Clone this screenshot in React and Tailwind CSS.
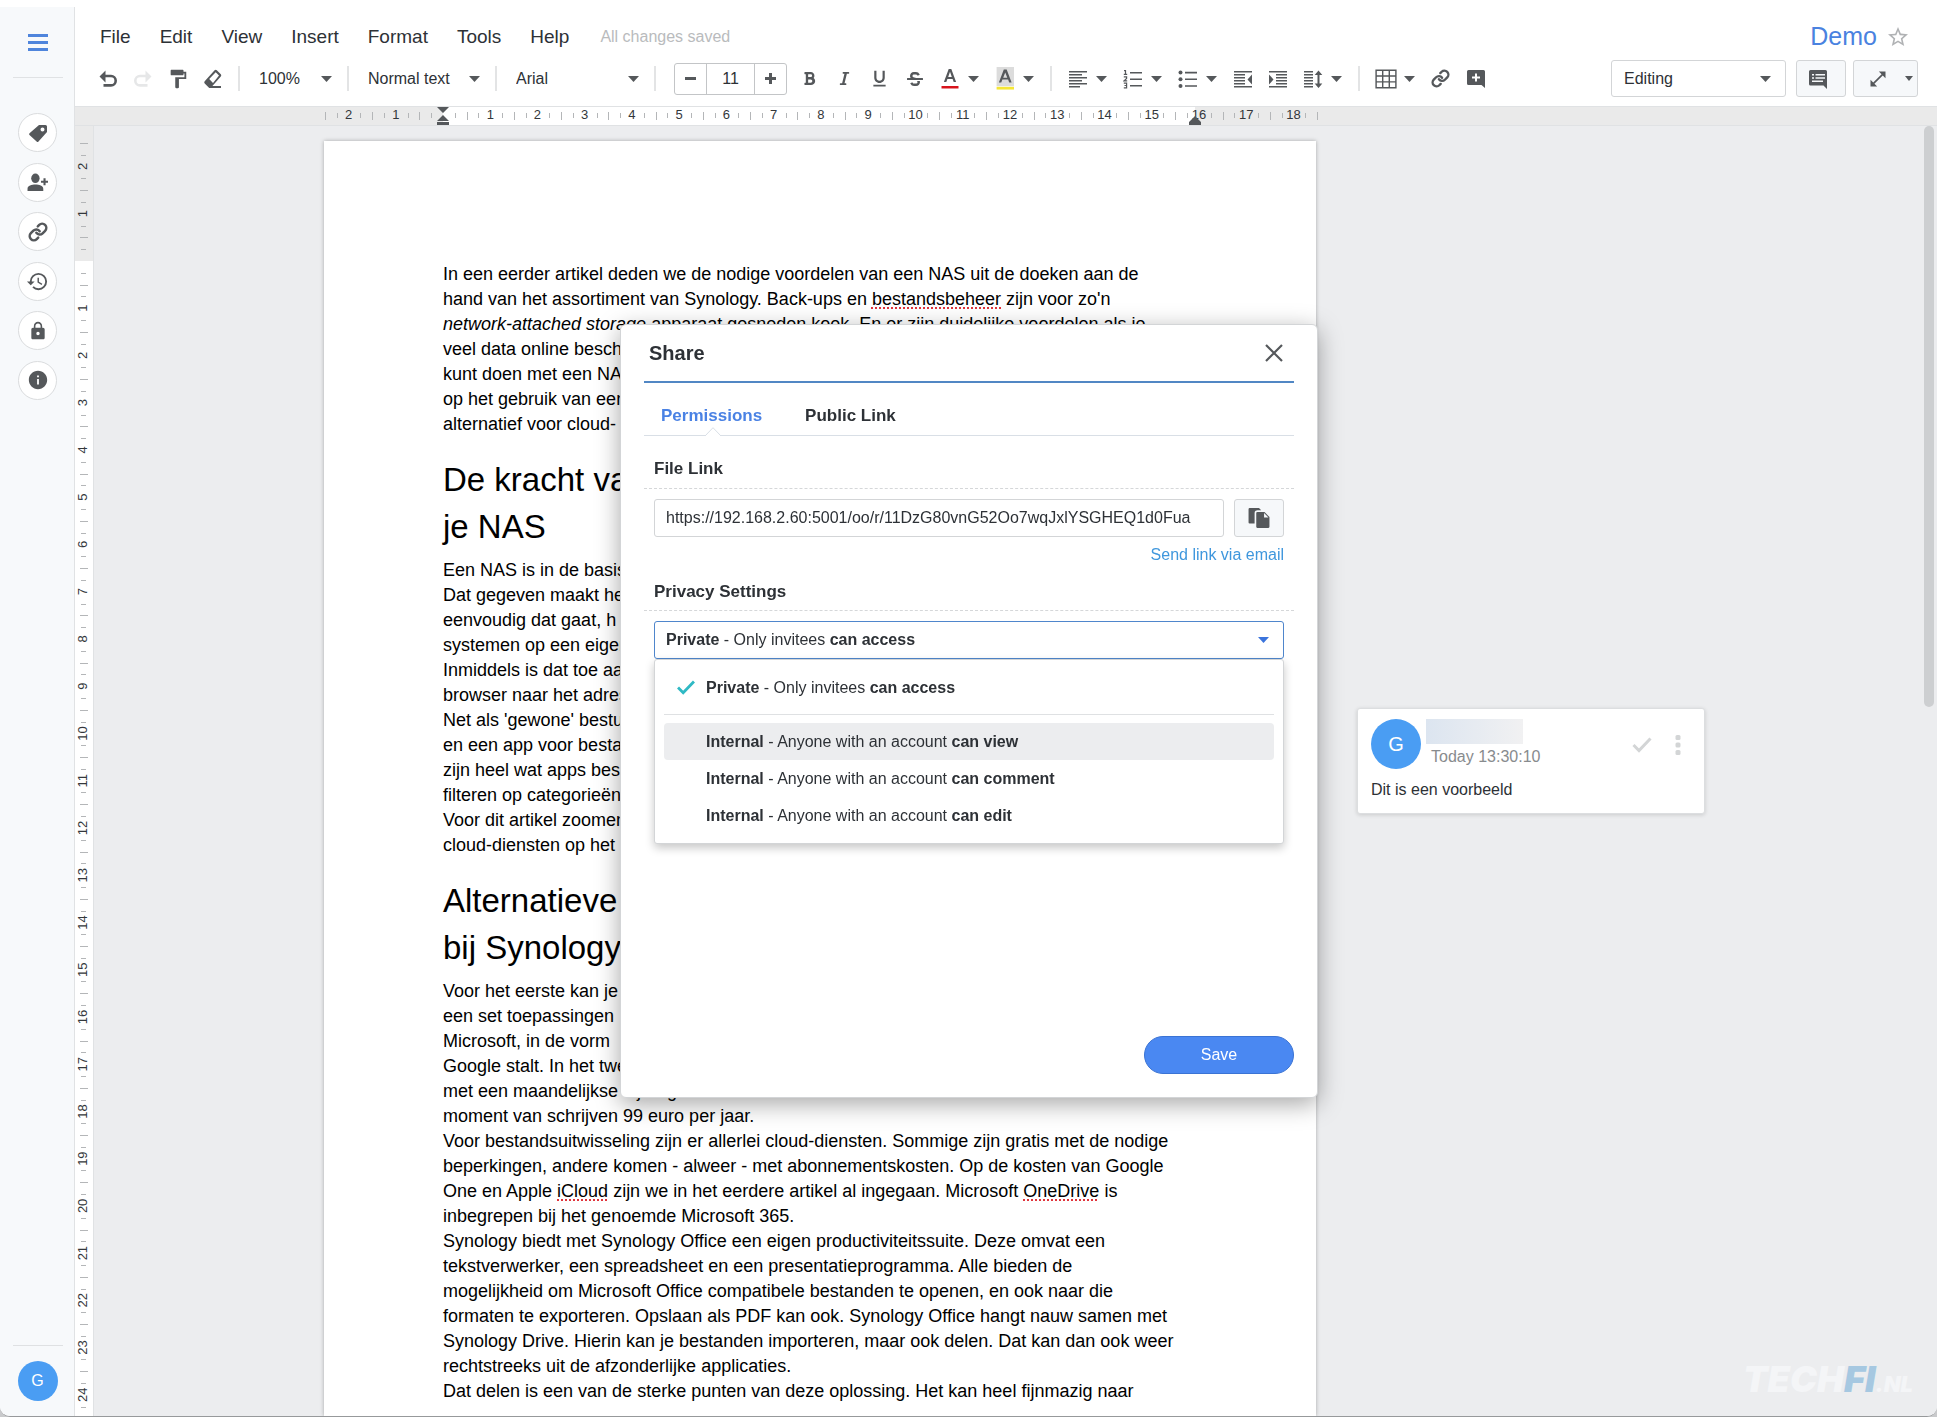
import { useState } from 'react'
import { Link as ChainIcon } from 'lucide-react'
import { FaBold, FaItalic, FaStrikethrough } from 'react-icons/fa'
import {
  MdFormatUnderlined,
  MdFormatPaint,
  MdHistory,
  MdLock,
  MdInfo,
  MdOpenInFull,
  MdStarBorder,
} from 'react-icons/md'

const MENUS = ['File', 'Edit', 'View', 'Insert', 'Format', 'Tools', 'Help']

// One centimetre on screen at 125% zoom
const CM = 120 / 2.54

// Plain strings are text; { s } is a misspelled word, { i } is italic
const INTRO = [
  ['In een eerder artikel deden we de nodige voordelen van een NAS uit de doeken aan de'],
  ['hand van het assortiment van Synology. Back-ups en ', { s: 'bestandsbeheer' }, " zijn voor zo'n"],
  [{ i: 'network-attached storage' }, ' apparaat gesneden koek. En er zijn duidelijke voordelen als je'],
  ['veel data online beschikbaar'],
  ['kunt doen met een NAS'],
  ['op het gebruik van een'],
  ['alternatief voor cloud-'],
]

const NAS = [
  ['Een NAS is in de basis'],
  ['Dat gegeven maakt het'],
  ['eenvoudig dat gaat, h'],
  ['systemen op een eigen'],
  ['Inmiddels is dat toe aan'],
  ['browser naar het adres'],
  ["Net als 'gewone' bestu"],
  ['en een app voor bestan'],
  ['zijn heel wat apps besch'],
  ['filteren op categorieën'],
  ['Voor dit artikel zoomen'],
  ['cloud-diensten op het'],
]

const OFFICE = [
  ['Voor het eerste kan je'],
  ['een set toepassingen'],
  ['Microsoft, in de vorm'],
  ['Google stalt. In het twe'],
  ['met een maandelijkse bijdrage'],
  ['moment van schrijven 99 euro per jaar.'],
  ['Voor bestandsuitwisseling zijn er allerlei cloud-diensten. Sommige zijn gratis met de nodige'],
  ['beperkingen, andere komen - alweer - met abonnementskosten. Op de kosten van Google'],
  ['One en Apple ', { s: 'iCloud' }, ' zijn we in het eerdere artikel al ingegaan. Microsoft ', { s: 'OneDrive' }, ' is'],
  ['inbegrepen bij het genoemde Microsoft 365.'],
  ['Synology biedt met Synology Office een eigen productiviteitssuite. Deze omvat een'],
  ['tekstverwerker, een spreadsheet en een presentatieprogramma. Alle bieden de'],
  ['mogelijkheid om Microsoft Office compatibele bestanden te openen, en ook naar die'],
  ['formaten te exporteren. Opslaan als PDF kan ook. Synology Office hangt nauw samen met'],
  ['Synology Drive. Hierin kan je bestanden importeren, maar ook delen. Dat kan dan ook weer'],
  ['rechtstreeks uit de afzonderlijke applicaties.'],
  ['Dat delen is een van de sterke punten van deze oplossing. Het kan heel fijnmazig naar'],
]

const PRIVACY = [
  { id: 'private', who: 'Private', text: 'Only invitees', can: 'can access' },
  { id: 'view', who: 'Internal', text: 'Anyone with an account', can: 'can view' },
  { id: 'comment', who: 'Internal', text: 'Anyone with an account', can: 'can comment' },
  { id: 'edit', who: 'Internal', text: 'Anyone with an account', can: 'can edit' },
]

/* ---------- icons ---------- */

function Caret({ className = '' }) {
  return (
    <svg className={`h-[6px] w-[11px] shrink-0 ${className}`} viewBox="0 0 11 6" fill="currentColor" aria-hidden="true">
      <path d="M0 0h11L5.5 6z" />
    </svg>
  )
}

function Icon({ children, className = 'size-[20px]' }) {
  return (
    <svg className={`shrink-0 ${className}`} viewBox="0 0 20 20" fill="currentColor" aria-hidden="true">
      {children}
    </svg>
  )
}

const UndoIcon = () => (
  <Icon>
    <path d="M1 7l6-6v4.2h5.5a6 6 0 010 12H5v-2.6h7.5a3.4 3.4 0 000-6.8H7V13z" transform="translate(.5 .5)" />
  </Icon>
)

const RedoIcon = () => (
  <Icon>
    <path d="M1 7l6-6v4.2h5.5a6 6 0 010 12H5v-2.6h7.5a3.4 3.4 0 000-6.8H7V13z" transform="translate(19.5 .5) scale(-1 1)" />
  </Icon>
)

const EraserIcon = () => (
  <Icon>
    <path
      fillRule="evenodd"
      d="M11.6 1.2a1.6 1.6 0 012.2 0l4 4a1.6 1.6 0 010 2.2L9.4 17H18v2H6.2L1.7 14.5a1.6 1.6 0 010-2.2zM12.7 3.2L6.2 10l3.8 4 6-7.5z"
    />
  </Icon>
)

const TextColorIcon = () => (
  <Icon className="size-[20px]">
    <path d="M8.7 0h2.6l4.8 13h-2.4l-1.1-3H7.4l-1.1 3H3.9zM10 2.8L8.2 8h3.6z" />
    <path fill="#d8141c" d="M1.5 17h17v2.500h-17z" />
  </Icon>
)

const HighlightIcon = () => (
  <Icon className="size-[24px]">
    <path fill="#dcdcdc" d="M3 0h14.5v16H3z" />
    <path d="M9 2h2.400l4.100 11h-2l-.9-2.500H7.800L6.900 13h-2zM10.200 4.500L8.500 8.900h3.400z" />
    <path fill="#f5e636" d="M3 16.500h14.500v2.300H3z" />
  </Icon>
)

const AlignIcon = () => (
  <Icon>
    <path d="M1 2h18v1.5H1zM1 5h13v1.5H1zM1 8h18v1.5H1zM1 11h13v1.5H1zM1 14h18v1.5H1zM1 17h11v1.5H1z" />
  </Icon>
)

const NumberedIcon = () => (
  <Icon>
    <path d="M7 3h12v1.6H7zM7 9.5h12v1.6H7zM7 16h12v1.6H7z" />
    <path
      fill="none"
      stroke="currentColor"
      strokeWidth="1.2"
      d="M1 1.6h1.5V5.4M.8 5.4h3.4M.8 7.8h2.8v1.7L1 11.8h3.2M.8 14.2h2.8v4.6H.8M1.5 16.5h2"
    />
  </Icon>
)

const BulletIcon = () => (
  <Icon>
    <circle cx="2.5" cy="3.5" r="2" />
    <circle cx="2.5" cy="10.2" r="2" />
    <circle cx="2.5" cy="17" r="2" />
    <path d="M7 2.8h12v1.6H7zM7 9.5h12v1.6H7zM7 16.2h12v1.6H7z" />
  </Icon>
)

const OutdentIcon = () => (
  <Icon>
    <path d="M1 2h18v1.5H1zM1 5h11v1.5H1zM1 8h11v1.5H1zM1 11h11v1.5H1zM1 14h11v1.5H1zM1 17h18v1.5H1zM19 5.5v10l-4.5-5z" />
  </Icon>
)

const IndentIcon = () => (
  <Icon>
    <path d="M1 2h18v1.5H1zM8 5h11v1.5H8zM8 8h11v1.5H8zM8 11h11v1.5H8zM8 14h11v1.5H8zM1 17h18v1.5H1zM1 5.5v10l4.5-5z" />
  </Icon>
)

const SpacingIcon = () => (
  <Icon>
    <path d="M1 2h9v1.5H1zM1 5h9v1.5H1zM1 8h9v1.5H1zM1 11h9v1.5H1zM1 14h9v1.5H1zM1 17h9v1.5H1z" />
    <path d="M15.5 1.5l3.8 4.5h-2.8v8.5h2.8L15.5 19l-3.8-4.5h2.8V6h-2.8z" />
  </Icon>
)

const TableIcon = () => (
  <Icon className="size-[22px]">
    <path
      fill="none"
      stroke="currentColor"
      strokeWidth="1.3"
      d="M1 2h18v16H1zM1 7.3h18M1 12.6h18M7 2v16M13 2v16"
    />
  </Icon>
)

const AddCommentIcon = () => (
  <Icon>
    <path
      fillRule="evenodd"
      d="M2.5 1h15A1.5 1.5 0 0119 2.5V19l-3.5-3h-13A1.5 1.5 0 011 14.5v-12A1.5 1.5 0 012.5 1zM9 4.500v3H6v2h3v3h2v-3h3v-2h-3v-3z"
    />
  </Icon>
)

const CommentListIcon = () => (
  <Icon>
    <path
      fillRule="evenodd"
      d="M2.5 1h15A1.5 1.5 0 0119 2.5V20l-3.5-3.5h-13A1.5 1.5 0 011 15V2.5A1.5 1.5 0 012.5 1zM4 5v1.6h2V5zM7.5 5v1.6H17V5zM4 8.2v1.6h2V8.2zM7.500 8.200v1.600H17V8.200zM4 11.400V13h11v-1.600z"
    />
  </Icon>
)

const TagIcon = () => (
  <Icon>
    <path
      fillRule="evenodd"
      d="M11 2h6.5A1.5 1.5 0 0119 3.5V9l-8.5 9.5a1.3 1.3 0 01-1.9 0L1.5 12a1.3 1.3 0 010-1.8zM14.5 4.5a2 2 0 100 4 2 2 0 000-4z"
    />
  </Icon>
)

const InviteIcon = () => (
  <Icon className="size-[21px]">
    <ellipse cx="8" cy="6" rx="4" ry="4.500" />
    <path d="M.5 18v-2c0-3 4-4 7.5-4s7.5 1 7.5 4v2zM15.700 6h2v2.300H20v2h-2.300v2.400h-2v-2.400h-2.400v-2h2.400z" />
  </Icon>
)

const CopyIcon = () => (
  <Icon className="size-[22px]">
    <path d="M1.5 1H10l2 2H8.5A2.5 2.5 0 006 5.5V15H1.5A1 1 0 01.5 14V2a1 1 0 011-1z" />
    <path d="M8.5 4.5H15l4.5 4.5v9a1 1 0 01-1 1h-10a1 1 0 01-1-1V5.5a1 1 0 011-1z" />
    <path fill="#f6f8fa" d="M14.6 5.5v4h4z" />
  </Icon>
)

function CheckIcon({ className }) {
  return (
    <svg className={className} viewBox="0 0 20 16" fill="none" stroke="currentColor" strokeWidth="3" aria-hidden="true">
      <path d="M1.5 8l5.5 5.5L18.5 1.5" />
    </svg>
  )
}

/* ---------- toolbar pieces ---------- */

function Tool({ label, children, className = '' }) {
  return (
    <button aria-label={label} className={`flex h-8 w-[35px] shrink-0 items-center justify-center ${className}`}>
      {children}
    </button>
  )
}

function MenuTool({ label, children }) {
  return (
    <button aria-label={label} className="flex h-8 w-[55px] shrink-0 items-center">
      <span className="flex w-9 shrink-0 justify-center">{children}</span>
      <Caret />
    </button>
  )
}

function Sep() {
  return <span className="mx-2 h-[25px] w-[2px] shrink-0 bg-[#e3e4e5]" />
}

function ToolSelect({ label, value, className }) {
  return (
    <div className={`relative flex h-8 shrink-0 items-center ${className}`}>
      <select aria-label={label} className="h-full w-full appearance-none bg-transparent px-[11px] text-[16px] text-[#2d3136]">
        <option>{value}</option>
      </select>
      <Caret className="pointer-events-none absolute right-[7px]" />
    </div>
  )
}

/* ---------- rulers ---------- */

function ticks(from, to) {
  const list = []
  for (let q = from * 4; q <= to * 4; q++) {
    if (q === 0) continue
    list.push({ q, pos: (q / 4) * CM, whole: q % 4 === 0, half: q % 2 === 0 })
  }
  return list
}

function HorizontalRuler() {
  return (
    <div className="flex h-[19px] shrink-0 justify-center border-b border-[#e0e2e4] bg-[#eaeaea] pl-[17px]">
      <svg className="h-[18px] w-[992px] shrink-0 overflow-visible" fill="#33373b" aria-hidden="true">
        <rect x="119" y="0" width="752" height="18" fill="#fff" />
        {ticks(-2.5, 18.5).map(t =>
          t.whole ? (
            <text key={t.q} x={119 + t.pos} y="12" fontSize="13" textAnchor="middle">
              {Math.abs(t.q / 4)}
            </text>
          ) : (
            <rect key={t.q} x={Math.round(119 + t.pos)} y={t.half ? 5 : 6} width="1" height={t.half ? 8 : 5} fill="#b4b6b8" />
          )
        )}
        <path fill="#55585b" d="M113 0h12l-6 6zM113 14l6-6 6 6zM113 15h12v3h-12zM865 18v-3l6-6 6 6v3z" />
      </svg>
      <div className="w-[389px] shrink-0" />
    </div>
  )
}

function VerticalRuler() {
  return (
    <div className="w-[19px] shrink-0 overflow-hidden border-r border-[#e0e2e4] bg-white">
      <svg className="h-[1400px] w-[18px]" fill="#33373b" aria-hidden="true">
        <rect x="0" y="0" width="18" height="135" fill="#eaeaea" />
        {ticks(-2.5, 26).map(t => {
          const y = 135 + t.pos
          return t.whole ? (
            <text key={t.q} x="0" y="0" fontSize="13" textAnchor="middle" transform={`translate(12 ${y}) rotate(-90)`}>
              {Math.abs(t.q / 4)}
            </text>
          ) : (
            <rect key={t.q} x={t.half ? 5 : 6} y={Math.round(y)} width={t.half ? 8 : 5} height="1" fill="#b4b6b8" />
          )
        })}
      </svg>
    </div>
  )
}

/* ---------- document ---------- */

function Lines({ lines }) {
  return (
    <p className="text-[18px] leading-[25px]">
      {lines.map((parts, n) => (
        <span key={n} className="block whitespace-nowrap">
          {parts.map((part, k) => {
            if (part.s) {
              return (
                <span
                  key={k}
                  className="underline decoration-[#e0343c] decoration-dotted decoration-2 underline-offset-2 [text-decoration-skip-ink:none]"
                >
                  {part.s}
                </span>
              )
            }
            if (part.i) return <em key={k}>{part.i}</em>
            return part
          })}
        </span>
      ))}
    </p>
  )
}

function Heading({ lines }) {
  return (
    <h2 className="mt-[19px] mb-[8px] text-[33px] leading-[47px]">
      {lines.map(line => (
        <span key={line} className="block whitespace-nowrap">{line}</span>
      ))}
    </h2>
  )
}

function CommentCard() {
  return (
    <aside className="mt-[567px] h-[106px] w-[348px] shrink-0 rounded-[3px] border border-[#dcdee0] bg-white px-[13px] pt-[10px] shadow-[0_1px_4px_rgba(0,0,0,0.15)]">
      <div className="flex">
        <div className="flex size-[50px] items-center justify-center rounded-full bg-[#4a9df3] text-[20px] text-white">G</div>
        <div className="ml-[5px]">
          <div className="h-[25px] w-[97px] bg-linear-to-r from-[#dce5f0] to-[#f1f1f2]" />
          <div className="pl-[5px] text-[16px] leading-[26px] text-[#888b8e]">Today 13:30:10</div>
        </div>
        <button aria-label="Resolve" className="ml-auto text-[#d3d5d6]">
          <CheckIcon className="h-[16px] w-[20px]" />
        </button>
        <button aria-label="More" className="mr-[10px] ml-[23px] text-[#d3d5d6]">
          <svg className="h-[20px] w-[6px]" viewBox="0 0 6 20" fill="currentColor" aria-hidden="true">
            <rect x=".5" y="0" width="5" height="5" rx="1.5" />
            <rect x=".5" y="7.5" width="5" height="5" rx="1.5" />
            <rect x=".5" y="15" width="5" height="5" rx="1.5" />
          </svg>
        </button>
      </div>
      <p className="mt-2 text-[16px] leading-[24px] text-[#2d3136]">Dit is een voorbeeld</p>
    </aside>
  )
}

/* ---------- share dialog ---------- */

function PrivacyText({ option }) {
  return (
    <span>
      <b>{option.who}</b> - {option.text} <b>{option.can}</b>
    </span>
  )
}

function ShareDialog({ onClose }) {
  const [selected, setSelected] = useState('private')
  const [open, setOpen] = useState(true)
  const current = PRIVACY.find(p => p.id === selected)

  return (
    <div
      role="dialog"
      aria-labelledby="share-title"
      className="relative flex h-[774px] w-[698px] flex-col rounded-[6px] border border-[#d3d5d7] bg-white px-[23px] pb-[23px] text-[#2d3136] shadow-[0_6px_24px_rgba(0,0,0,0.35)]"
    >
      <div className="flex h-[58px] items-center justify-between border-b-2 border-[#5187c4] pr-[11px] pl-[5px]">
        <h1 id="share-title" className="text-[20px] font-bold">Share</h1>
        <button aria-label="Close" onClick={onClose}>
          <svg className="size-[18px]" viewBox="0 0 18 18" fill="none" stroke="#55585b" strokeWidth="2.2">
            <path d="M1 1l16 16M17 1L1 17" />
          </svg>
        </button>
      </div>

      <div role="tablist" className="relative flex h-[53px] gap-[43px] border-b border-[#d9dfe6] pt-[14px] pl-[17px] text-[17px] font-bold">
        <button role="tab" aria-selected="true" className="h-[38px] text-[#4a82e4]">Permissions</button>
        <button role="tab" aria-selected="false" className="h-[38px]">Public Link</button>
        <svg className="absolute -bottom-px left-[61px] h-[9px] w-[16px]" viewBox="0 0 16 9" aria-hidden="true">
          <path d="M0 9L8 .7 16 9" fill="#fff" stroke="#d9dfe6" />
        </svg>
      </div>

      <div className="flex h-[53px] items-center border-b border-dashed border-[#d5d7d9] pt-[14px] pl-[10px]">
        <label htmlFor="file-link" className="text-[17px] font-bold">File Link</label>
      </div>
      <div className="mt-[10px] flex gap-[10px] px-[10px]">
        <input
          id="file-link"
          readOnly
          value="https://192.168.2.60:5001/oo/r/11DzG80vnG52Oo7wqJxlYSGHEQ1d0Fua"
          className="h-[38px] min-w-0 flex-1 rounded-[3px] border border-[#d3d5d7] px-[11px] text-[16px] outline-none"
        />
        <button aria-label="Copy link" className="flex h-[38px] w-[50px] items-center justify-center rounded-[3px] border border-[#d3d5d7] bg-[#f6f8fa] text-[#55585b]">
          <CopyIcon />
        </button>
      </div>
      <a href="#email" className="mt-[6px] self-end pr-[10px] text-[16px] leading-[24px] text-[#3f97dd]">Send link via email</a>

      <div className="flex h-[44px] items-center border-b border-dashed border-[#d5d7d9] pt-[7px] pl-[10px]">
        <h2 id="privacy-label" className="text-[17px] font-bold">Privacy Settings</h2>
      </div>
      <div className="relative mx-[10px] mt-[10px] text-[16px]">
        <button
          role="combobox"
          aria-expanded={open}
          aria-controls="privacy-list"
          aria-labelledby="privacy-label"
          onClick={() => setOpen(!open)}
          className="flex h-[38px] w-full items-center justify-between rounded-[3px] border border-[#4f86cc] pr-[14px] pl-[11px]"
        >
          <PrivacyText option={current} />
          <Caret className="text-[#3b74dc]" />
        </button>
        {open && (
          <ul
            id="privacy-list"
            role="listbox"
            aria-labelledby="privacy-label"
            className="absolute top-full left-0 w-full rounded-[3px] border border-[#d3d5d7] bg-white p-[9px] shadow-[0_4px_10px_rgba(0,0,0,0.22)]"
          >
            {PRIVACY.map((option, n) => (
              <li key={option.id} role="option" aria-selected={option.id === selected}>
                <button
                  onClick={() => setSelected(option.id)}
                  className={`flex h-[37px] w-full items-center rounded-[4px] pl-[12px] ${n === 1 ? 'bg-[#ecedef]' : ''}`}
                >
                  <span className="w-[30px] text-[#2fb9c4]">
                    {option.id === selected && <CheckIcon className="h-[15px] w-[20px]" />}
                  </span>
                  <PrivacyText option={option} />
                </button>
                {n === 0 && <hr className="my-2 border-[#dfe1e3]" />}
              </li>
            ))}
          </ul>
        )}
      </div>

      <button className="mt-auto h-[38px] w-[150px] self-end rounded-full border border-[#3a73d4] bg-[#4a88f2] text-[16px] text-white">Save</button>
    </div>
  )
}

/* ---------- app ---------- */

function Sidebar() {
  const items = [
    ['Label', <TagIcon />],
    ['Invite', <InviteIcon />],
    ['Copy link', <ChainIcon className="size-[20px]" strokeWidth={3} />],
    ['Version history', <MdHistory className="size-[23px]" />],
    ['Permissions', <MdLock className="size-[20px]" />],
    ['Info', <MdInfo className="size-[22px]" />],
  ]

  return (
    <nav className="flex w-[75px] shrink-0 flex-col items-center border-r border-[#e0e2e4] bg-[#f7f9fb] pl-px">
      <button aria-label="Menu" className="mt-[26px] flex h-[18px] w-5 flex-col justify-center gap-1">
        <span className="h-[3px] bg-[#4f85dc]" />
        <span className="h-[3px] bg-[#4f85dc]" />
        <span className="h-[3px] bg-[#4f85dc]" />
      </button>
      <hr className="mt-[26px] w-[50px] border-[#e0e2e4]" />
      <div className="mt-[35px] flex h-[287px] flex-col justify-between">
        {items.map(([label, icon]) => (
          <button
            key={label}
            aria-label={label}
            className="flex size-[39px] items-center justify-center rounded-full border border-[#dadcde] bg-white text-[#55585b]"
          >
            {icon}
          </button>
        ))}
      </div>
      <hr className="mt-auto w-[50px] border-[#dfe1e3]" />
      <button aria-label="Account" className="mt-[15px] mb-[15px] flex size-[40px] items-center justify-center rounded-full bg-[#4a9df3] text-[16px] text-white">
        G
      </button>
    </nav>
  )
}

function Header() {
  return (
    <header className="shrink-0 border-b border-[#e0e2e4] pt-3 pr-[19px] pb-[9px] text-[#55585b]">
      <div className="flex h-9 items-center pl-[25px]">
        <nav className="flex gap-[29px] text-[19px] text-[#2d3136]">
          {MENUS.map(menu => (
            <button key={menu}>{menu}</button>
          ))}
        </nav>
        <span className="ml-[31px] text-[16px] text-[#b9bbbd]">All changes saved</span>
        <span className="ml-auto text-[25px] text-[#4a82e0]">Demo</span>
        <button aria-label="Favourite" className="mr-[8px] ml-[9px] text-[#b0b2b4]">
          <MdStarBorder className="size-[24px]" />
        </button>
      </div>

      <div className="mt-[5px] flex h-[37px] items-center pl-[15px]">
        <Tool label="Undo"><UndoIcon /></Tool>
        <Tool label="Redo" className="text-[#e6e7e8]"><RedoIcon /></Tool>
        <Tool label="Paint format"><MdFormatPaint className="size-[22px]" /></Tool>
        <Tool label="Clear formatting"><EraserIcon /></Tool>
        <Sep />
        <ToolSelect label="Zoom" value="100%" className="w-[91px]" />
        <Sep />
        <ToolSelect label="Style" value="Normal text" className="w-[130px]" />
        <Sep />
        <ToolSelect label="Font" value="Arial" className="w-[141px]" />
        <Sep />
        <div className="mr-[5px] ml-[10px] flex h-[32px] w-[113px] shrink-0 rounded-[3px] border border-[#c3c5c7]">
          <button aria-label="Decrease font size" className="flex w-[31px] items-center justify-center">
            <span className="h-[3px] w-[11px] bg-[#55585b]" />
          </button>
          <input
            aria-label="Font size"
            defaultValue="11"
            className="w-[49px] border-x border-[#c3c5c7] text-center text-[16px] text-[#2d3136] outline-none"
          />
          <button aria-label="Increase font size" className="flex flex-1 items-center justify-center">
            <svg className="size-[11px]" viewBox="0 0 11 11" fill="currentColor" aria-hidden="true">
              <path d="M4 0h3v4h4v3H7v4H4V7H0V4h4z" />
            </svg>
          </button>
        </div>
        <Tool label="Bold"><FaBold className="size-[15px]" /></Tool>
        <Tool label="Italic"><FaItalic className="size-[15px]" /></Tool>
        <Tool label="Underline"><MdFormatUnderlined className="size-[21px]" /></Tool>
        <Tool label="Strikethrough"><FaStrikethrough className="size-[16px]" /></Tool>
        <MenuTool label="Text color"><TextColorIcon /></MenuTool>
        <MenuTool label="Highlight color"><HighlightIcon /></MenuTool>
        <Sep />
        <MenuTool label="Align"><AlignIcon /></MenuTool>
        <MenuTool label="Numbered list"><NumberedIcon /></MenuTool>
        <MenuTool label="Bulleted list"><BulletIcon /></MenuTool>
        <Tool label="Decrease indent"><OutdentIcon /></Tool>
        <Tool label="Increase indent"><IndentIcon /></Tool>
        <MenuTool label="Line spacing"><SpacingIcon /></MenuTool>
        <Sep />
        <MenuTool label="Table"><TableIcon /></MenuTool>
        <Tool label="Insert link"><ChainIcon className="size-[19px]" strokeWidth={3} /></Tool>
        <Tool label="Add comment"><AddCommentIcon /></Tool>

        <div className="relative ml-auto flex h-[37px] w-[175px] items-center">
          <select
            aria-label="Mode"
            className="h-full w-full appearance-none rounded-[3px] border border-[#d3d5d7] bg-white px-[12px] text-[16px] text-[#2d3136]"
          >
            <option>Editing</option>
          </select>
          <Caret className="pointer-events-none absolute right-[15px]" />
        </div>
        <button aria-label="Comments" className="ml-[10px] flex h-[37px] w-[50px] items-center justify-center rounded-[3px] border border-[#d3d5d7] bg-[#f6f8fa] pr-[6px]">
          <CommentListIcon />
        </button>
        <button aria-label="View mode" className="ml-[7px] flex h-[37px] w-[65px] items-center justify-end rounded-[3px] border border-[#d3d5d7] bg-[#f6f8fa] pr-[4px]">
          <MdOpenInFull className="mr-[17px] size-[20px]" />
          <svg className="h-[5px] w-[8px]" viewBox="0 0 8 5" fill="currentColor" aria-hidden="true">
            <path d="M0 0h8L4 5z" />
          </svg>
        </button>
      </div>
    </header>
  )
}

export default function App() {
  const [sharing, setSharing] = useState(true)

  return (
    <div className="h-screen overflow-hidden bg-[#c9cacc] font-['Liberation_Sans',Arial,sans-serif]">
      <div className="relative flex h-full overflow-hidden rounded-b-[10px] border-b border-[#97999b] bg-white pt-[7px]">
        <Sidebar />
        <div className="flex min-w-0 flex-1 flex-col">
          <Header />
          <HorizontalRuler />
          <div className="flex min-h-0 flex-1">
            <VerticalRuler />
            <main className="relative flex min-w-0 flex-1 justify-center gap-[41px] overflow-hidden bg-[#ecedef] pt-[15px] pr-[2px]">
              <article className="w-[992px] shrink-0 bg-white px-[119px] pt-[121px] text-black shadow-[0_0_4px_rgba(0,0,0,0.3)]">
                <Lines lines={INTRO} />
                <Heading lines={['De kracht van', 'je NAS']} />
                <Lines lines={NAS} />
                <Heading lines={['Alternatieve', 'bij Synology']} />
                <Lines lines={OFFICE} />
              </article>
              <CommentCard />
              <div className="absolute top-0 right-[3px] h-[581px] w-[10px] rounded-full bg-[#cdcfd1]" />
            </main>
          </div>
        </div>

        <div className="absolute right-[24px] bottom-[10px] flex items-baseline font-['Inter',sans-serif] text-[36px] font-black text-[#f4f5f7] italic">
          TECH<span className="text-[#a6c8e1]">FI</span><span className="text-[22px]">.NL</span>
        </div>
      </div>

      {sharing && (
        <div className="fixed inset-0 flex items-center justify-center pt-[5px] pl-px">
          <ShareDialog onClose={() => setSharing(false)} />
        </div>
      )}
    </div>
  )
}
